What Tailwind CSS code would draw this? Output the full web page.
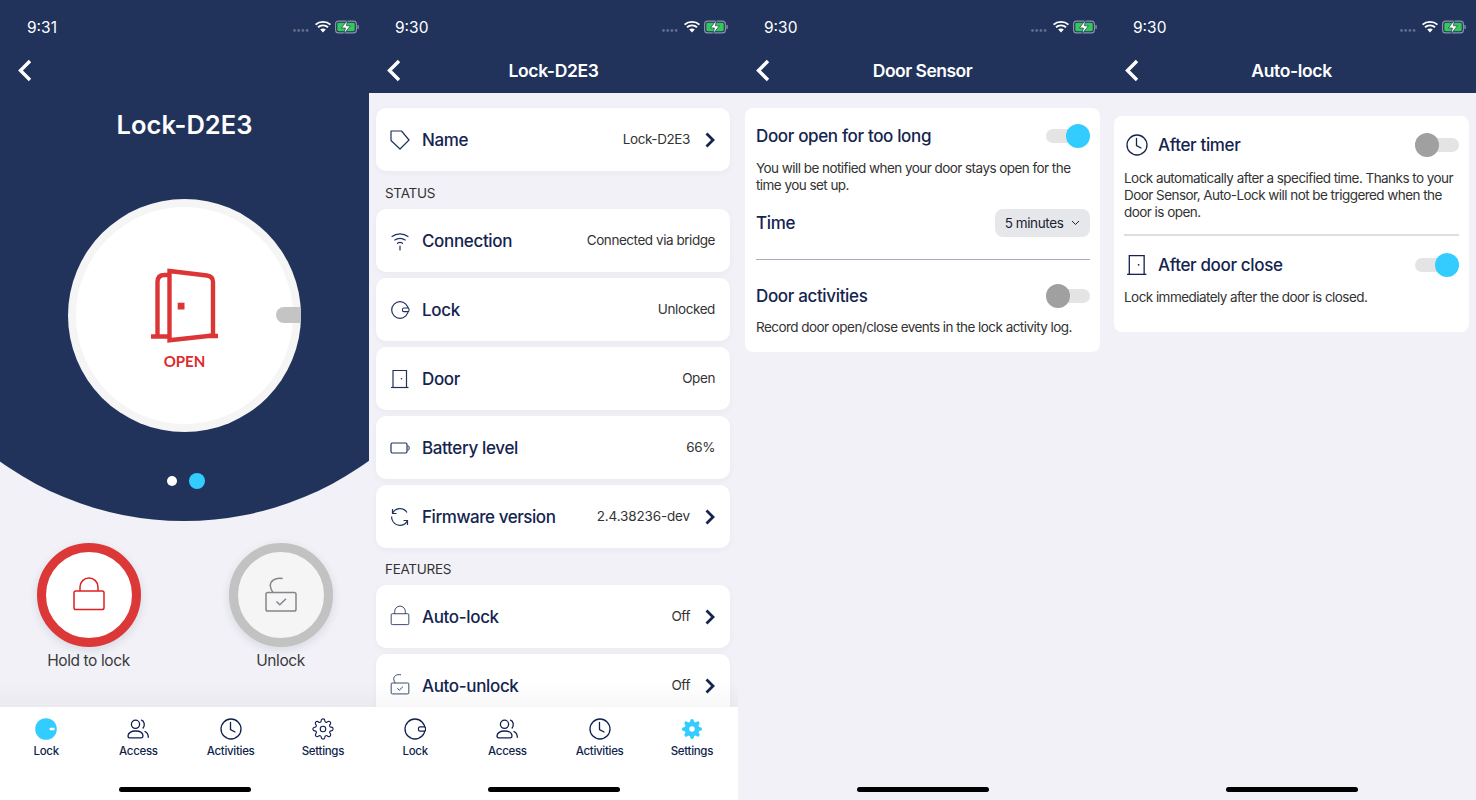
<!DOCTYPE html>
<html lang="en">

<head>
    <meta charset="UTF-8">
    <meta name="viewport" content="width=device-width, initial-scale=1.0">
    <script src="https://cdn.jsdelivr.net/npm/@tailwindcss/browser@4"></script>
    <title>Lock settings</title>
</head>

<body class="bg-[#f1f1f7] font-[family-name:Inter,sans-serif]">
    <!-- shared icons -->
    <svg class="hidden">
        <symbol id="status" viewBox="0 0 66 14">
            <g fill="#5f6c8b"><circle cx="1.5" cy="10.5" r="1.4" /><circle cx="5.7" cy="10.5" r="1.4" /><circle cx="9.9" cy="10.5" r="1.4" /><circle cx="14.1" cy="10.5" r="1.4" /></g>
            <g fill="none" stroke="#fff" stroke-width="1.9"><path d="M22.6 4.6c4-3.6 10.8-3.6 14.8 0" /><path d="M25 7.2c2.7-2.4 7.3-2.4 10 0" /></g>
            <path d="M27.2 9.5c1.5-1.3 4.1-1.3 5.6 0L30 12.6z" fill="#fff" />
            <rect x="42.6" y="1.1" width="20.8" height="11.8" rx="3" fill="#21335b" stroke="#8b95ae" stroke-width="1.1" />
            <rect x="44.3" y="2.8" width="17.4" height="8.4" rx="1.4" fill="#35c759" />
            <rect x="64.4" y="5" width="1.3" height="4" rx=".6" fill="#8b95ae" />
            <path d="M54.5 0 48.4 8h4l-1.4 6 6.4-8.2h-4z" fill="#fff" stroke="#21335b" stroke-width=".7" />
        </symbol>
        <symbol id="door-open" viewBox="0 0 70 76">
            <g fill="none" stroke="currentColor" stroke-width="4.4">
                <path d="M1 68.5h18M59 68h9" />
                <path d="M19.5 3 57 7.5q6 .7 6 6.5v53.5l-43.5 4.7z" />
                <path d="M7.5 68V14q0-7 7-7h5" />
            </g>
            <rect x="27.7" y="34.7" width="6.8" height="6.8" fill="currentColor" />
        </symbol>
        <symbol id="padlock" viewBox="0 0 34 36">
            <g fill="none" stroke="currentColor" stroke-width="1.5">
                <rect x="2" y="15" width="30" height="18.5" rx="1.8" />
                <path d="M8 15V11a9 9 0 0 1 18 0v4" />
            </g>
        </symbol>
        <symbol id="padlock-open" viewBox="0 0 34 36">
            <g fill="none" stroke="currentColor" stroke-width="1.5">
                <rect x="2" y="15.5" width="30" height="18.5" rx="1.8" />
                <path d="M18.7 1.5C11 0 6 4 6.3 9c.2 3 1.700 5 2.700 6.500" />
                <path d="m12.500 24.500 3.300 3.200 6.200-6" />
            </g>
        </symbol>
        <symbol id="tab-lock" viewBox="0 0 22 22">
            <circle cx="11" cy="11" r="10" fill="none" stroke="currentColor" stroke-width="1.3" />
            <rect x="14.500" y="8.800" width="7" height="4.400" rx="1.400" fill="#fff" stroke="currentColor" stroke-width="1.200" />
        </symbol>
        <symbol id="tab-lock-on" viewBox="0 0 22 22">
            <circle cx="11" cy="11" r="10.800" fill="#33ccff" />
            <rect x="14.600" y="9.800" width="5" height="2.400" rx=".6" fill="#fff" />
        </symbol>
        <symbol id="people" viewBox="0 0 22 20">
            <g fill="none" stroke="currentColor" stroke-width="1.300" stroke-linecap="round">
                <circle cx="8.500" cy="5.300" r="4.100" />
                <path d="M2.600 18.800q-1.600 0-1.600-1.700c0-3.200 3.200-5.100 7.500-5.100s7.500 1.900 7.500 5.100q0 1.700-1.600 1.700z" />
                <path d="M14.500 1.200c2.800 1 3.800 5 1.600 7.800" />
                <path d="M18 12.500c2 1 3.300 3 3.300 5.800" />
            </g>
        </symbol>
        <symbol id="clock" viewBox="0 0 22 22">
            <circle cx="11" cy="11" r="10" fill="none" stroke="currentColor" stroke-width="1.300" />
            <path d="M10.500 4.500v7l4.500 2.500" fill="none" stroke="currentColor" stroke-width="1.300" stroke-linecap="round" />
        </symbol>
        <symbol id="gear" viewBox="0 0 24 24">
            <path d="M19.4 15a1.65 1.65 0 0 0 .33 1.82l.06.06a2 2 0 0 1 0 2.83 2 2 0 0 1-2.83 0l-.06-.06a1.65 1.65 0 0 0-1.82-.33 1.65 1.65 0 0 0-1 1.51V21a2 2 0 0 1-2 2 2 2 0 0 1-2-2v-.09A1.65 1.65 0 0 0 9 19.4a1.65 1.65 0 0 0-1.82.33l-.06.06a2 2 0 0 1-2.83 0 2 2 0 0 1 0-2.83l.06-.06a1.65 1.65 0 0 0 .33-1.82 1.65 1.65 0 0 0-1.51-1H3a2 2 0 0 1-2-2 2 2 0 0 1 2-2h.09A1.65 1.65 0 0 0 4.6 9a1.65 1.65 0 0 0-.33-1.82l-.06-.06a2 2 0 0 1 0-2.83 2 2 0 0 1 2.83 0l.06.06a1.65 1.65 0 0 0 1.82.33H9a1.65 1.65 0 0 0 1-1.51V3a2 2 0 0 1 2-2 2 2 0 0 1 2 2v.09a1.65 1.65 0 0 0 1 1.51 1.65 1.65 0 0 0 1.82-.33l.06-.06a2 2 0 0 1 2.83 0 2 2 0 0 1 0 2.83l-.06.06a1.65 1.65 0 0 0-.33 1.82V9a1.65 1.65 0 0 0 1.51 1H21a2 2 0 0 1 2 2 2 2 0 0 1-2 2h-.09a1.65 1.65 0 0 0-1.51 1z" fill="none" stroke="currentColor" stroke-width="1.200" />
            <circle cx="12" cy="12" r="3" fill="none" stroke="currentColor" stroke-width="1.200" />
        </symbol>
        <symbol id="gear-on" viewBox="0 0 24 24">
            <path d="M19.4 15a1.65 1.65 0 0 0 .33 1.82l.06.06a2 2 0 0 1 0 2.83 2 2 0 0 1-2.83 0l-.06-.06a1.65 1.65 0 0 0-1.82-.33 1.65 1.65 0 0 0-1 1.51V21a2 2 0 0 1-2 2 2 2 0 0 1-2-2v-.09A1.65 1.65 0 0 0 9 19.4a1.65 1.65 0 0 0-1.82.33l-.06.06a2 2 0 0 1-2.83 0 2 2 0 0 1 0-2.83l.06-.06a1.65 1.65 0 0 0 .33-1.82 1.65 1.65 0 0 0-1.51-1H3a2 2 0 0 1-2-2 2 2 0 0 1 2-2h.09A1.65 1.65 0 0 0 4.6 9a1.65 1.65 0 0 0-.33-1.82l-.06-.06a2 2 0 0 1 0-2.83 2 2 0 0 1 2.83 0l.06.06a1.65 1.65 0 0 0 1.82.33H9a1.65 1.65 0 0 0 1-1.51V3a2 2 0 0 1 2-2 2 2 0 0 1 2 2v.09a1.65 1.65 0 0 0 1 1.51 1.65 1.65 0 0 0 1.82-.33l.06-.06a2 2 0 0 1 2.83 0 2 2 0 0 1 0 2.83l-.06.06a1.65 1.65 0 0 0-.33 1.82V9a1.65 1.65 0 0 0 1.51 1H21a2 2 0 0 1 2 2 2 2 0 0 1-2 2h-.09a1.65 1.65 0 0 0-1.51 1z" fill="#33ccff" />
            <circle cx="12" cy="12" r="3" fill="#fff" />
        </symbol>
        <symbol id="tag" viewBox="0 0 20 20">
            <path d="M1 1h10.500L19 10l-9 9-9-8.500z" fill="none" stroke="currentColor" stroke-width="1.200" stroke-linejoin="round" />
        </symbol>
        <symbol id="wifi" viewBox="0 0 20 20">
            <g fill="none" stroke="currentColor" stroke-width="1.200" stroke-linecap="round">
                <path d="M2 5.500c4.500-3.500 11.500-3.500 16 0" />
                <path d="M4.800 9c3-2.300 7.400-2.300 10.400 0" />
                <path d="M7.500 12.300c1.500-1 3.500-1 5 0" />
                <path d="M10 15v4" />
            </g>
        </symbol>
        <symbol id="lock-dial" viewBox="0 0 20 20">
            <circle cx="10" cy="10" r="8.300" fill="none" stroke="currentColor" stroke-width="1.200" />
            <rect x="12.500" y="8" width="6.500" height="3.600" rx="1.200" fill="#fff" stroke="currentColor" stroke-width="1.100" />
        </symbol>
        <symbol id="door" viewBox="0 0 20 20">
            <g fill="none" stroke="currentColor" stroke-width="1.200">
                <path d="M3 18.500V1.500h13.500v17" />
                <path d="M1 18.500h17.500" />
            </g>
            <circle cx="11.500" cy="9.800" r=".8" fill="currentColor" />
        </symbol>
        <symbol id="battery" viewBox="0 0 20 20">
            <rect x="1" y="5" width="16" height="10" rx="1.500" fill="none" stroke="currentColor" stroke-width="1.200" />
            <path d="M17.500 8h.6q1 0 1 1v2q0 1-1 1h-.6" fill="none" stroke="currentColor" stroke-width="1" />
        </symbol>
        <symbol id="sync" viewBox="0 0 20 20">
            <g fill="none" stroke="currentColor" stroke-width="1.200">
                <path d="M2.500 6.500A8.300 8.300 0 0 1 17 5.500" />
                <path d="M2.500 2v4.500h4" />
                <path d="M17.500 13.500A8.300 8.300 0 0 1 3 14.500" />
                <path d="M17.500 18v-4.500h-4" />
                <path d="M1.600 9.500a8 8 0 0 0 1.400 5" />
            </g>
        </symbol>
    </svg>

    <div class="grid grid-cols-4 w-[1476px] h-[800px] overflow-hidden">

        <!-- Lock screen -->
        <section class="relative h-[800px] overflow-hidden flex flex-col bg-[#f1f1f7]">
            <div class="absolute w-[628px] h-[628px] rounded-full bg-[#21335b] top-[-107px] left-[-130px]"></div>
            <header class="relative h-[93px] bg-[#21335b] text-white">
                <div class="h-[54px] pl-[27px] pr-[10px] flex items-center justify-between">
                    <span class="mt-[2px] text-[15.5px]">9:31</span>
                    <svg class="w-[66px] h-[14px]"><use href="#status" /></svg>
                </div>
                <svg class="absolute left-[17px] top-[59px] w-[15px] h-[23px]" viewBox="0 0 15 23" fill="none" stroke="currentColor" stroke-width="3.400"><path d="M13 2 3.500 11.500 13 21" /></svg>
            </header>
            <main class="relative flex-1 flex flex-col items-center">
                <h1 class="mt-[16px] h-[31px] leading-[32px] text-[25.5px] font-semibold text-white">Lock-D2E3</h1>
                <div class="relative mt-[59px] w-[233px] h-[233px] rounded-full bg-[#f5f5f5] p-2 overflow-hidden">
                    <div class="h-full rounded-full bg-white flex flex-col items-center pt-[61px]">
                        <svg class="w-[70px] h-[76px] text-[#dc3535]"><use href="#door-open" /></svg>
                        <span class="mt-[7px] text-[15px] leading-[20px] font-bold text-[#dd2a2a] font-[family-name:Lato,sans-serif]">OPEN</span>
                    </div>
                    <div class="absolute right-0 top-[108px] w-[25px] h-[16px] rounded-l-full bg-[#c4c4c4]"></div>
                </div>
                <div class="mt-[41px] h-4 ml-[3px] flex items-center gap-3">
                    <span class="size-[10px] rounded-full bg-white"></span>
                    <span class="size-4 rounded-full bg-[#33ccff]"></span>
                </div>
                <div class="mt-[54px] flex gap-[88px]">
                    <div class="flex flex-col items-center">
                        <div class="size-[104px] rounded-full border-[9px] border-[#dc3838] bg-white flex items-center justify-center shadow-[0_3px_10px_rgba(40,40,90,0.12)]">
                            <svg class="w-[34px] h-[36px] mb-[2px] text-[#e02020]"><use href="#padlock" /></svg>
                        </div>
                        <span class="mt-[2px] text-[15.5px] tracking-[-0.4px] leading-[24px] text-[#3a3a3c]">Hold to lock</span>
                    </div>
                    <div class="flex flex-col items-center">
                        <div class="size-[104px] rounded-full border-[9px] border-[#c2c2c2] bg-[#f5f5f5] flex items-center justify-center shadow-[0_3px_10px_rgba(40,40,90,0.12)]">
                            <svg class="w-[34px] h-[36px] text-[#85858b]"><use href="#padlock-open" /></svg>
                        </div>
                        <span class="mt-[2px] text-[15.5px] tracking-[-0.4px] leading-[24px] text-[#3a3a3c]">Unlock</span>
                    </div>
                </div>
            </main>
            <nav class="relative h-[93px] bg-white flex flex-col text-[#101f4e]">
                <div class="absolute bottom-full inset-x-0 h-[26px] bg-gradient-to-b from-transparent to-black/[0.03]"></div>
                <div class="grid grid-cols-4 pt-[11px]">
                    <div class="flex flex-col items-center"><svg class="size-[22px]"><use href="#tab-lock-on" /></svg><span class="mt-[2px] text-[11.5px] tracking-[-0.3px] leading-[18px] font-medium">Lock</span></div>
                    <div class="flex flex-col items-center"><svg class="size-[22px]"><use href="#people" /></svg><span class="mt-[2px] text-[11.5px] tracking-[-0.3px] leading-[18px] font-medium">Access</span></div>
                    <div class="flex flex-col items-center"><svg class="size-[22px]"><use href="#clock" /></svg><span class="mt-[2px] text-[11.5px] tracking-[-0.3px] leading-[18px] font-medium">Activities</span></div>
                    <div class="flex flex-col items-center"><svg class="size-[22px]"><use href="#gear" /></svg><span class="mt-[2px] text-[11.5px] tracking-[-0.3px] leading-[18px] font-medium">Settings</span></div>
                </div>
                <div class="mt-auto mb-[8px] mx-auto w-[132px] h-[5px] rounded-full bg-black"></div>
            </nav>
        </section>

        <!-- Lock settings -->
        <section class="relative h-[800px] overflow-hidden flex flex-col bg-[#f1f1f7]">
            <header class="relative h-[93px] bg-[#21335b] text-white">
                <div class="h-[54px] pl-[26px] pr-[10px] flex items-center justify-between">
                    <span class="mt-[2px] text-[15.5px]">9:30</span>
                    <svg class="w-[66px] h-[14px]"><use href="#status" /></svg>
                </div>
                <h2 class="text-center text-[17.5px] tracking-[-0.35px] leading-[34px] font-semibold">Lock-D2E3</h2>
                <svg class="absolute left-[17px] top-[59px] w-[15px] h-[23px]" viewBox="0 0 15 23" fill="none" stroke="currentColor" stroke-width="3.400"><path d="M13 2 3.500 11.500 13 21" /></svg>
            </header>
            <main class="flex-1 overflow-hidden pl-[7px] pr-[8px] pt-[15px] flex flex-col">
                <div class="shrink-0 h-[63px] rounded-[10px] bg-white flex items-center pl-[14px] pr-[15px] shadow-[0_2px_6px_rgba(40,40,90,0.04)]">
                    <svg class="size-5 text-[#21335b]"><use href="#tag" /></svg>
                    <span class="ml-3 mt-[2px] text-[17px] tracking-[-0.35px] font-medium text-[#14244f]">Name</span>
                    <span class="ml-auto text-[13.5px] tracking-[-0.4px] text-[#333]">Lock-D2E3</span>
                    <svg class="ml-[15px] w-[10px] h-[16px] text-[#14244f]" viewBox="0 0 10 16" fill="none" stroke="currentColor" stroke-width="2.800"><path d="m1.500 1.500 6.500 6.500-6.500 6.500" /></svg>
                </div>
                <h3 class="shrink-0 h-[38px] pl-[9px] pt-[12px] text-[13.5px] tracking-[-0.3px] leading-[20px] text-[#333]">STATUS</h3>
                <div class="shrink-0 h-[63px] rounded-[10px] bg-white flex items-center pl-[14px] pr-[15px] shadow-[0_2px_6px_rgba(40,40,90,0.04)]">
                    <svg class="size-5 text-[#21335b]"><use href="#wifi" /></svg>
                    <span class="ml-3 mt-[2px] text-[17px] tracking-[-0.35px] font-medium text-[#14244f]">Connection</span>
                    <span class="ml-auto text-[13.5px] tracking-[-0.45px] text-[#333]">Connected via bridge</span>
                </div>
                <div class="shrink-0 mt-[6px] h-[63px] rounded-[10px] bg-white flex items-center pl-[14px] pr-[15px] shadow-[0_2px_6px_rgba(40,40,90,0.04)]">
                    <svg class="size-5 text-[#21335b]"><use href="#lock-dial" /></svg>
                    <span class="ml-3 mt-[2px] text-[17px] tracking-[-0.35px] font-medium text-[#14244f]">Lock</span>
                    <span class="ml-auto text-[13.5px] tracking-[-0.4px] text-[#333]">Unlocked</span>
                </div>
                <div class="shrink-0 mt-[6px] h-[63px] rounded-[10px] bg-white flex items-center pl-[14px] pr-[15px] shadow-[0_2px_6px_rgba(40,40,90,0.04)]">
                    <svg class="size-5 text-[#21335b]"><use href="#door" /></svg>
                    <span class="ml-3 mt-[2px] text-[17px] tracking-[-0.35px] font-medium text-[#14244f]">Door</span>
                    <span class="ml-auto text-[13.5px] tracking-[-0.4px] text-[#333]">Open</span>
                </div>
                <div class="shrink-0 mt-[6px] h-[63px] rounded-[10px] bg-white flex items-center pl-[14px] pr-[15px] shadow-[0_2px_6px_rgba(40,40,90,0.04)]">
                    <svg class="size-5 text-[#21335b]"><use href="#battery" /></svg>
                    <span class="ml-3 mt-[2px] text-[17px] tracking-[-0.35px] font-medium text-[#14244f]">Battery level</span>
                    <span class="ml-auto text-[13.5px] tracking-[-0.4px] text-[#333]">66%</span>
                </div>
                <div class="shrink-0 mt-[6px] h-[63px] rounded-[10px] bg-white flex items-center pl-[14px] pr-[15px] shadow-[0_2px_6px_rgba(40,40,90,0.04)]">
                    <svg class="size-5 text-[#21335b]"><use href="#sync" /></svg>
                    <span class="ml-3 mt-[2px] text-[17px] tracking-[-0.45px] font-medium text-[#14244f]">Firmware version</span>
                    <span class="ml-auto text-[13.5px] tracking-[-0.15px] text-[#333]">2.4.38236-dev</span>
                    <svg class="ml-[15px] w-[10px] h-[16px] text-[#14244f]" viewBox="0 0 10 16" fill="none" stroke="currentColor" stroke-width="2.800"><path d="m1.500 1.500 6.500 6.500-6.500 6.500" /></svg>
                </div>
                <h3 class="shrink-0 h-[37px] pl-[9px] pt-[11px] text-[13.5px] tracking-[-0.3px] leading-[20px] text-[#333]">FEATURES</h3>
                <div class="shrink-0 h-[63px] rounded-[10px] bg-white flex items-center pl-[14px] pr-[15px] shadow-[0_2px_6px_rgba(40,40,90,0.04)]">
                    <svg class="w-5 h-[23px] mb-[2px] text-[#21335b]" viewBox="0 0 34 36"><use href="#padlock" /></svg>
                    <span class="ml-3 mt-[2px] text-[17px] tracking-[-0.35px] font-medium text-[#14244f]">Auto-lock</span>
                    <span class="ml-auto text-[13.5px] tracking-[-0.4px] text-[#333]">Off</span>
                    <svg class="ml-[15px] w-[10px] h-[16px] text-[#14244f]" viewBox="0 0 10 16" fill="none" stroke="currentColor" stroke-width="2.800"><path d="m1.500 1.500 6.500 6.500-6.500 6.500" /></svg>
                </div>
                <div class="shrink-0 mt-[6px] h-[63px] rounded-[10px] bg-white flex items-center pl-[14px] pr-[15px] shadow-[0_2px_6px_rgba(40,40,90,0.04)]">
                    <svg class="w-5 h-[23px] mb-[2px] text-[#21335b]" viewBox="0 0 34 36"><use href="#padlock-open" /></svg>
                    <span class="ml-3 mt-[2px] text-[17px] tracking-[-0.35px] font-medium text-[#14244f]">Auto-unlock</span>
                    <span class="ml-auto text-[13.5px] tracking-[-0.4px] text-[#333]">Off</span>
                    <svg class="ml-[15px] w-[10px] h-[16px] text-[#14244f]" viewBox="0 0 10 16" fill="none" stroke="currentColor" stroke-width="2.800"><path d="m1.500 1.500 6.500 6.500-6.500 6.500" /></svg>
                </div>
            </main>
            <nav class="relative h-[93px] shrink-0 bg-white flex flex-col text-[#101f4e]">
                <div class="absolute bottom-full inset-x-0 h-[26px] bg-gradient-to-b from-transparent to-black/[0.03]"></div>
                <div class="grid grid-cols-4 pt-[11px]">
                    <div class="flex flex-col items-center"><svg class="size-[22px]"><use href="#tab-lock" /></svg><span class="mt-[2px] text-[11.5px] tracking-[-0.3px] leading-[18px] font-medium">Lock</span></div>
                    <div class="flex flex-col items-center"><svg class="size-[22px]"><use href="#people" /></svg><span class="mt-[2px] text-[11.5px] tracking-[-0.3px] leading-[18px] font-medium">Access</span></div>
                    <div class="flex flex-col items-center"><svg class="size-[22px]"><use href="#clock" /></svg><span class="mt-[2px] text-[11.5px] tracking-[-0.3px] leading-[18px] font-medium">Activities</span></div>
                    <div class="flex flex-col items-center"><svg class="size-[22px]"><use href="#gear-on" /></svg><span class="mt-[2px] text-[11.5px] tracking-[-0.3px] leading-[18px] font-medium">Settings</span></div>
                </div>
                <div class="mt-auto mb-[8px] mx-auto w-[132px] h-[5px] rounded-full bg-black"></div>
            </nav>
        </section>

        <!-- Door sensor -->
        <section class="relative h-[800px] overflow-hidden flex flex-col bg-[#f1f1f7]">
            <header class="relative h-[93px] bg-[#21335b] text-white">
                <div class="h-[54px] pl-[26px] pr-[10px] flex items-center justify-between">
                    <span class="mt-[2px] text-[15.5px]">9:30</span>
                    <svg class="w-[66px] h-[14px]"><use href="#status" /></svg>
                </div>
                <h2 class="text-center text-[17.5px] tracking-[-0.5px] leading-[34px] font-semibold">Door Sensor</h2>
                <svg class="absolute left-[17px] top-[59px] w-[15px] h-[23px]" viewBox="0 0 15 23" fill="none" stroke="currentColor" stroke-width="3.400"><path d="M13 2 3.500 11.500 13 21" /></svg>
            </header>
            <main class="flex-1 pt-[15px] pl-[7px] pr-[7px]">
                <div class="rounded-[8px] bg-white pl-[11px] pr-[10px] pt-4 pb-4 text-[#333]">
                    <div class="h-6 flex items-center justify-between">
                        <span class="mt-[2px] text-[17px] tracking-[-0.35px] font-medium text-[#14244f]">Door open for too long</span>
                        <div class="relative w-11 h-[14px] rounded-full bg-[#e4e4e4]"><span class="absolute right-0 top-[-5px] size-6 rounded-full bg-[#33ccff]"></span></div>
                    </div>
                    <p class="mt-[12px] text-[13.5px] tracking-[-0.55px] leading-[17px]">You will be notified when your door stays open for the time you set up.</p>
                    <div class="mt-[15px] h-7 flex items-center justify-between">
                        <span class="mt-[2px] text-[17px] tracking-[-0.35px] font-medium text-[#14244f]">Time</span>
                        <div class="w-[95px] h-7 rounded-lg bg-[#e5e7eb] flex items-center justify-center gap-2 text-[13.5px] tracking-[-0.4px] text-[#1c2233]">5 minutes
                            <svg class="w-[9px] h-[6px]" viewBox="0 0 9 6" fill="none" stroke="currentColor" stroke-width="1"><path d="m1 1 3.500 3.500L8 1" /></svg>
                        </div>
                    </div>
                    <div class="mt-[22px] h-px bg-[#a7adbb]"></div>
                    <div class="mt-6 h-6 flex items-center justify-between">
                        <span class="mt-[2px] text-[17px] tracking-[-0.35px] font-medium text-[#14244f]">Door activities</span>
                        <div class="relative w-11 h-[14px] rounded-full bg-[#e4e4e4]"><span class="absolute left-0 top-[-5px] size-6 rounded-full bg-[#a0a0a0]"></span></div>
                    </div>
                    <p class="mt-[11px] text-[13.5px] tracking-[-0.55px] leading-[17px]">Record door open/close events in the lock activity log.</p>
                </div>
            </main>
            <div class="mb-[8px] mx-auto w-[132px] h-[5px] rounded-full bg-black"></div>
        </section>

        <!-- Auto-lock -->
        <section class="relative h-[800px] overflow-hidden flex flex-col bg-[#f1f1f7]">
            <header class="relative h-[93px] bg-[#21335b] text-white">
                <div class="h-[54px] pl-[26px] pr-[10px] flex items-center justify-between">
                    <span class="mt-[2px] text-[15.5px]">9:30</span>
                    <svg class="w-[66px] h-[14px]"><use href="#status" /></svg>
                </div>
                <h2 class="text-center text-[17.5px] tracking-[-0.35px] leading-[34px] font-semibold">Auto-lock</h2>
                <svg class="absolute left-[17px] top-[59px] w-[15px] h-[23px]" viewBox="0 0 15 23" fill="none" stroke="currentColor" stroke-width="3.400"><path d="M13 2 3.500 11.500 13 21" /></svg>
            </header>
            <main class="flex-1 pt-[23px] pl-[7px] pr-[7px]">
                <div class="rounded-[8px] bg-white px-[10px] pt-[17px] pb-[26px] text-[#333]">
                    <div class="h-6 flex items-center">
                        <svg class="ml-[2px] size-[22px] text-[#14244f]"><use href="#clock" /></svg>
                        <span class="ml-[10px] mt-[2px] text-[17px] tracking-[-0.35px] font-medium text-[#14244f]">After timer</span>
                        <div class="ml-auto relative w-11 h-[14px] rounded-full bg-[#e4e4e4]"><span class="absolute left-0 top-[-5px] size-6 rounded-full bg-[#a0a0a0]"></span></div>
                    </div>
                    <p class="mt-[13px] text-[13.5px] tracking-[-0.55px] leading-[17px]">Lock automatically after a specified time. Thanks to your Door Sensor, Auto-Lock will not be triggered when the door is open.</p>
                    <div class="mt-[13px] h-[1.500px] bg-[#dddde3]"></div>
                    <div class="mt-[17px] h-6 flex items-center">
                        <svg class="ml-[2px] size-[22px] text-[#14244f]" viewBox="0 0 20 20"><use href="#door" /></svg>
                        <span class="ml-[10px] mt-[2px] text-[17px] tracking-[-0.35px] font-medium text-[#14244f]">After door close</span>
                        <div class="ml-auto relative w-11 h-[14px] rounded-full bg-[#e4e4e4]"><span class="absolute right-0 top-[-5px] size-6 rounded-full bg-[#33ccff]"></span></div>
                    </div>
                    <p class="mt-[12px] text-[13.5px] tracking-[-0.55px] leading-[17px]">Lock immediately after the door is closed.</p>
                </div>
            </main>
            <div class="mb-[8px] mx-auto w-[132px] h-[5px] rounded-full bg-black"></div>
        </section>
    </div>
</body>

</html>
